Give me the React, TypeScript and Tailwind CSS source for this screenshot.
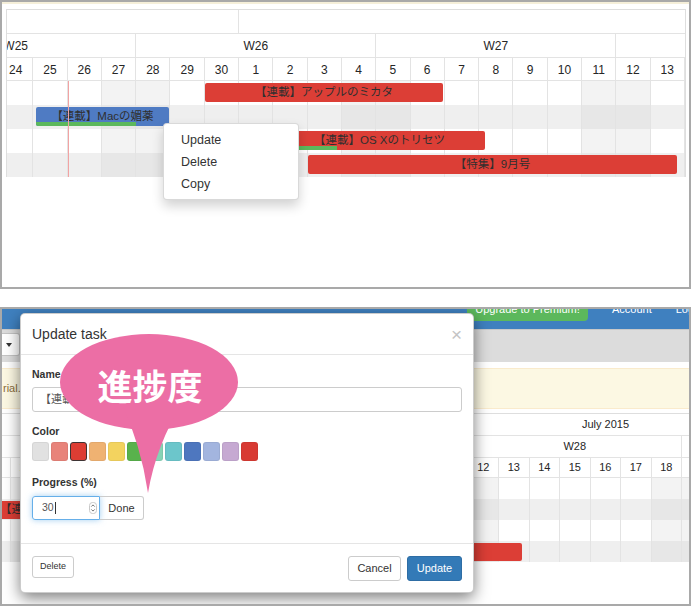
import type { ReactNode } from 'react'

const FONT = "font-['Liberation_Sans','Noto_Sans_CJK_JP',sans-serif]"

const TOP_DAYS = [24, 25, 26, 27, 28, 29, 30, 1, 2, 3, 4, 5, 6, 7, 8, 9, 10, 11, 12, 13]
const TOP_WEEKEND = [3, 4, 10, 11, 17, 18]

const BOTTOM_DAYS = [26, 27, 28, 29, 30, 1, 2, 3, 4, 5, 6, 7, 8, 9, 10, 11, 12, 13, 14, 15, 16, 17, 18, 19]
const BOTTOM_WEEKEND = [1, 2, 8, 9, 15, 16, 22, 23]

const SWATCHES = [
  'bg-[#e1e1e1] border-black/5',
  'bg-[#e8837a] border-black/5',
  'bg-[#dd3d33] border-[#3e3434]',
  'bg-[#efb272] border-black/5',
  'bg-[#f3d35f] border-black/5',
  'bg-[#59b24c] border-black/5',
  'bg-[#86d3b5] border-black/5',
  'bg-[#6cc6cb] border-black/5',
  'bg-[#4e77bf] border-black/5',
  'bg-[#a3b5df] border-black/5',
  'bg-[#c6a9d2] border-black/5',
  'bg-[#d83a33] border-black/5',
]

interface BarProps {
  left: number
  width: number
  color: string
  label?: string
  progress?: number
  align?: 'center' | 'left'
  small?: boolean
}

function Bar({ left, width, color, label, progress, align = 'center', small }: BarProps) {
  return (
    <div
      className={`absolute top-[2px] overflow-hidden rounded-[2px] ${small ? 'h-[18px]' : 'h-[19px]'} ${color}`}
      style={{ left, width }}
    >
      <div
        className={`flex h-full items-center whitespace-nowrap text-[11.5px] text-[#2f2f2f] ${
          align === 'center' ? 'justify-center' : 'justify-start pl-[10px]'
        }`}
      >
        {label}
      </div>
      {progress ? (
        <div className="absolute bottom-0 left-0 h-[4px] bg-[#5cb85c]" style={{ width: progress }} />
      ) : null}
    </div>
  )
}

function TopRow({ shade, children }: { shade?: boolean; children?: ReactNode }) {
  return (
    <div className={`relative h-[24px] ${shade ? 'bg-[#efefef]' : 'bg-white'}`}>
      <div className="-ml-[8px] flex h-full">
        {TOP_DAYS.map((d, i) => (
          <div
            key={d + '-' + i}
            className={`h-full w-[34.3px] shrink-0 border-r border-[#e3e3e3] ${
              TOP_WEEKEND.includes(i) ? (shade ? 'bg-[#e7e7e7]' : 'bg-[#f3f3f3]') : ''
            }`}
          />
        ))}
      </div>
      {children}
    </div>
  )
}

function BottomRow({ shade, children }: { shade?: boolean; children?: ReactNode }) {
  return (
    <div className={`relative h-[21px] ${shade ? 'bg-[#efefef]' : 'bg-white'}`}>
      <div className="-ml-[21.5px] flex h-full">
        {BOTTOM_DAYS.map((d, i) => (
          <div
            key={d + '-' + i}
            className={`h-full w-[30.5px] shrink-0 border-r border-[#e3e3e3] ${
              BOTTOM_WEEKEND.includes(i) ? (shade ? 'bg-[#e7e7e7]' : 'bg-[#f3f3f3]') : ''
            }`}
          />
        ))}
      </div>
      {children}
    </div>
  )
}

function TopPanel() {
  return (
    <div className="relative h-[289px] overflow-hidden border-2 border-[#a9a9a9] bg-white">
      <div className="h-[2px] bg-[#f5efd9]" />
      <div className="ml-[4px] mt-[5px] w-[680px] overflow-hidden border-x border-t border-[#dedede] text-[12px] text-[#262626]">
        {/* month */}
        <div className="-ml-[8px] flex h-[24px] border-b border-[#e3e3e3]">
          <div className="w-[240.1px] shrink-0 border-r border-[#e3e3e3]" />
          <div className="flex-1" />
        </div>
        {/* weeks */}
        <div className="-ml-[110.9px] flex h-[24px] border-b border-[#e3e3e3]">
          {['W25', 'W26', 'W27', 'W28'].map((w) => (
            <div
              key={w}
              className="flex w-[240.1px] shrink-0 items-center justify-center border-r border-[#e3e3e3]"
            >
              {w}
            </div>
          ))}
        </div>
        {/* days */}
        <div className="-ml-[8px] flex h-[23px] border-b border-[#e3e3e3]">
          {TOP_DAYS.map((d, i) => (
            <div
              key={d + '-' + i}
              className="flex w-[34.3px] shrink-0 items-center justify-center border-r border-[#e3e3e3] pt-[2px]"
            >
              {d}
            </div>
          ))}
        </div>
        {/* tasks */}
        <div className="relative">
          <TopRow>
            <Bar left={198} width={238} color="bg-[#dc3e36]" label="【連載】アップルのミカタ" />
          </TopRow>
          <TopRow shade>
            <Bar left={29} width={133} color="bg-[#4f7bc3]" label="【連載】Macの媚薬" progress={100} />
          </TopRow>
          <TopRow>
            <Bar left={267} width={211} color="bg-[#dc3e36]" label="【連載】OS Xのトリセツ" progress={63} />
          </TopRow>
          <TopRow shade>
            <Bar left={301} width={369} color="bg-[#dc3e36]" label="【特集】9月号" />
          </TopRow>
          <div className="absolute bottom-0 left-[61px] top-0 w-px bg-[#f2a3a3]" />
        </div>
      </div>

      {/* context menu */}
      <div className="absolute left-[161px] top-[121px] h-[77px] w-[136px] rounded-[4px] border border-black/15 bg-white py-[5px] text-[12.5px] text-[#333] shadow-[0_6px_12px_rgba(0,0,0,0.18)]">
        {['Update', 'Delete', 'Copy'].map((t) => (
          <div key={t} className="h-[22px] pl-[17px] leading-[22px]">
            {t}
          </div>
        ))}
      </div>
    </div>
  )
}

function Modal() {
  return (
    <div className="absolute left-[18px] top-[4px] flex h-[280px] w-[454px] flex-col rounded-[5px] border border-black/20 bg-white text-[#333] shadow-[0_5px_15px_rgba(0,0,0,0.5)]">
      <div className="flex h-[41px] shrink-0 items-center justify-between border-b border-[#e5e5e5] px-[11px]">
        <span className="text-[14px]">Update task</span>
        <span className="text-[19px] leading-none text-[#c4c4c4]">×</span>
      </div>
      <div className="border-b border-[#e5e5e5] px-[11px] pb-[23px] pt-[12px]">
        <div className="text-[10.5px] font-bold leading-[14px]">Name</div>
        <div className="mt-[6px] flex h-[25px] items-center rounded-[3px] border border-[#ccc] px-[7px] text-[11px] text-[#555]">
          【連載】Macの媚薬
        </div>
        <div className="mt-[12px] text-[10.5px] font-bold leading-[14px]">Color</div>
        <div className="mt-[4px] flex gap-[2px]">
          {SWATCHES.map((c, i) => (
            <div key={i} className={`h-[19px] w-[17px] rounded-[3px] border ${c}`} />
          ))}
        </div>
        <div className="mt-[14px] text-[10.5px] font-bold leading-[14px]">Progress (%)</div>
        <div className="mt-[7px] flex h-[24px]">
          <div className="flex w-[68px] items-center rounded-l-[3px] border border-[#66afe9] pl-[9px] text-[10.5px] text-[#555] shadow-[0_0_6px_rgba(102,175,233,0.6)]">
            30
            <span className="ml-[1px] h-[12px] w-px bg-[#333]" />
            <svg className="ml-auto mr-[2px]" width="8" height="12" viewBox="0 0 8 12">
              <rect x="0.5" y="0.5" width="7" height="11" rx="3" fill="none" stroke="#c8c8c8" />
              <path d="M2.3 4.6 L4 2.9 L5.7 4.6" fill="none" stroke="#666" strokeWidth="0.9" />
              <path d="M2.3 7.4 L4 9.1 L5.7 7.4" fill="none" stroke="#666" strokeWidth="0.9" />
            </svg>
          </div>
          <div className="flex w-[44px] items-center justify-center rounded-r-[3px] border border-l-0 border-[#ccc] text-[11px]">
            Done
          </div>
        </div>
      </div>
      <div className="flex items-start justify-between px-[11px] pt-[12px]">
        <div className="flex h-[22px] w-[42px] items-center justify-center rounded-[3px] border border-[#ccc] text-[9px]">
          Delete
        </div>
        <div className="flex gap-[6px]">
          <div className="flex h-[25px] w-[53px] items-center justify-center rounded-[3px] border border-[#ccc] text-[11px]">
            Cancel
          </div>
          <div className="flex h-[25px] w-[55px] items-center justify-center rounded-[3px] border border-[#2e6da4] bg-[#337ab7] text-[11px] text-white">
            Update
          </div>
        </div>
      </div>
    </div>
  )
}

function BottomPanel() {
  return (
    <div className="relative mt-[18px] h-[299px] overflow-hidden border-2 border-[#a9a9a9] bg-white">
      {/* navbar */}
      <div className="flex h-[20px] items-start whitespace-nowrap bg-[#3f80bf] text-[11px] text-white">
        <div className="ml-[465px] h-[12px] w-[121px] shrink-0 overflow-hidden rounded-b-[4px] bg-[#5cb85c]">
          <div className="-mt-[10px] text-center leading-[20px]">Upgrade to Premium!</div>
        </div>
        <div className="-mt-[10px] ml-[24px] shrink-0 leading-[20px]">Account</div>
        <div className="-mt-[10px] ml-[24px] shrink-0 leading-[20px]">Logout</div>
      </div>
      {/* toolbar */}
      <div className="h-[33px] border-t border-[#c9c9c9] bg-[#dcdcdc] pt-[3px]">
        <div className="flex h-[23px] w-[18px] items-center justify-end rounded-r-[3px] border border-l-0 border-[#c4c4c4] bg-white pr-[7px]">
          <span className="h-0 w-0 border-x-[3px] border-t-[4px] border-x-transparent border-t-[#333]" />
        </div>
      </div>
      <div className="h-[6px]" />
      {/* alert */}
      <div className="flex h-[41px] items-center border-y border-[#faebcc] bg-[#fcf8e3] text-[11px] text-[#8a6d3b]">
        <span className="pl-[1px]">rial.</span>
      </div>
      <div className="h-[4px]" />
      {/* gantt */}
      <div className="overflow-hidden border-t border-[#dedede] text-[11px] text-[#262626]">
        <div className="-ml-[21.5px] flex h-[22px] border-b border-[#e3e3e3]">
          <div className="w-[152.5px] shrink-0 border-r border-[#e3e3e3]" />
          <div className="flex flex-1 items-center pl-[449px]">July 2015</div>
        </div>
        <div className="-ml-[21.5px] flex h-[22px] border-b border-[#e3e3e3]">
          <div className="w-[61px] shrink-0 border-r border-[#e3e3e3]" />
          {['W26', 'W27', 'W28'].map((w) => (
            <div
              key={w}
              className="flex w-[213.5px] shrink-0 items-center justify-center border-r border-[#e3e3e3]"
            >
              {w}
            </div>
          ))}
          <div className="flex-1" />
        </div>
        <div className="-ml-[21.5px] flex h-[20px] border-b border-[#e3e3e3]">
          {BOTTOM_DAYS.map((d, i) => (
            <div
              key={d + '-' + i}
              className="flex w-[30.5px] shrink-0 items-center justify-center border-r border-[#e3e3e3]"
            >
              {d}
            </div>
          ))}
        </div>
        <BottomRow />
        <BottomRow shade>
          <Bar left={-12} width={200} color="bg-[#dc3e36]" label="【連載】Macの媚薬" align="left" small />
        </BottomRow>
        <BottomRow />
        <BottomRow shade>
          <Bar left={300} width={220} color="bg-[#dc3e36]" small />
        </BottomRow>
      </div>

      <Modal />

      {/* callout */}
      <svg className="absolute left-[53px] top-[21px]" width="190" height="170" viewBox="0 0 190 170">
        <ellipse cx="94" cy="52" rx="89" ry="48" fill="#ec6ea5" />
        <path d="M66 72 Q86 115 93 163 Q101 115 128 72 Z" fill="#ec6ea5" />
      </svg>
      <div className="absolute left-[53px] top-[21px] flex h-[116px] w-[190px] items-center justify-center text-[35px] font-bold text-white">
        進捗度
      </div>
    </div>
  )
}

export default function App() {
  return (
    <div className={`h-[606px] w-[691px] overflow-hidden bg-white ${FONT}`}>
      <TopPanel />
      <BottomPanel />
    </div>
  )
}
